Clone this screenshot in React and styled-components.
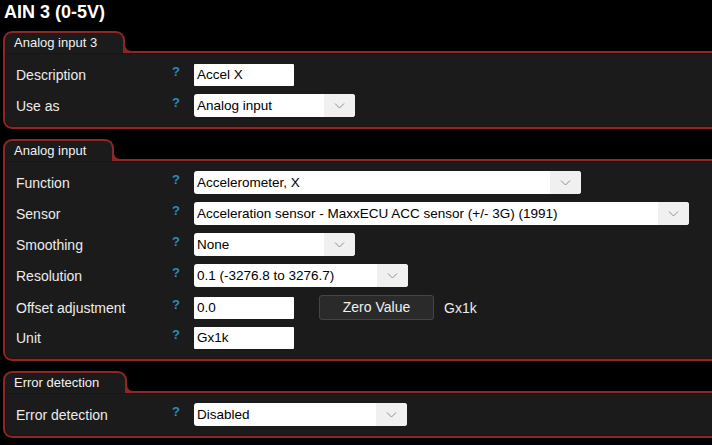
import React from 'react';
import styled, { createGlobalStyle } from 'styled-components';

const GlobalStyle = createGlobalStyle`
    html, body {
        margin: 0;
        padding: 0;
        background: #000;
        overflow: hidden;
    }
    body {
        font-family: "Liberation Sans", Arial, sans-serif;
        color: #ececec;
    }
`;

const Styled = {
    Page: styled.div`
        width: 712px;
        height: 445px;
        overflow: hidden;
        padding-left: 3px;
        box-sizing: border-box;
    `,
    Title: styled.h1`
        margin: 0;
        padding: 0 0 0 1px;
        height: 31px;
        box-sizing: border-box;
        font-size: 18px;
        font-weight: bold;
        line-height: 24px;
        color: #fff;
    `,
    Section: styled.section`
        display: flex;
        flex-direction: column;
        align-items: flex-start;
        width: 740px;
        margin-bottom: 10px;
    `,
    Tab: styled.div`
        position: relative;
        z-index: 1;
        height: 20px;
        margin-bottom: -2px;
        padding: 0 26px 0 9px;
        border: 2px solid #8e2626;
        border-bottom: none;
        border-radius: 9px 9px 0 0;
        background: #1b1b1b;
        font-size: 13px;
        line-height: 19px;
        color: #f2f2f2;

        &::after {
            content: '';
            position: absolute;
            left: 100%;
            bottom: 0;
            width: 10px;
            height: 10px;
            border-left: 2px solid #8e2626;
            border-bottom: 2px solid #8e2626;
            border-bottom-left-radius: 8px;
            background: #000;
        }
    `,
    Body: styled.div`
        align-self: stretch;
        display: flex;
        flex-direction: column;
        gap: 8px;
        padding: 10px 0 10px 11px;
        border: 2px solid #8e2626;
        border-radius: 0 0 0 9px;
        background: #1b1b1b;
        box-shadow: inset 0 0 0 1px #2a0d0d;
    `,
    Row: styled.div`
        display: grid;
        grid-template-columns: 156px 22px auto;
        align-items: center;
        height: 23px;
        font-size: 14px;
    `,
    Help: styled.span`
        color: #2a8cbd;
        font-weight: bold;
        font-size: 13px;
        position: relative;
        top: -3px;
    `,
    Controls: styled.div`
        display: flex;
        align-items: center;
    `,
    TextBox: styled.div`
        width: 100px;
        height: 22px;
        box-sizing: border-box;
        padding: 0 3px;
        background: #fff;
        border-radius: 1px;
        color: #000;
        font-size: 13.5px;
        line-height: 22px;
    `,
    Select: styled.div`
        display: flex;
        width: ${p => p.$width}px;
        height: 23px;
        background: #fff;
        border-radius: 3px;
        overflow: hidden;
        color: #000;
        font-size: 13.5px;
        line-height: 23px;
    `,
    SelectText: styled.span`
        flex: 1;
        padding-left: 3px;
        white-space: nowrap;
    `,
    Arrow: styled.span`
        display: flex;
        align-items: center;
        justify-content: center;
        width: 31px;
        background: #f0f0f0;
    `,
    Button: styled.button`
        margin-left: 25px;
        width: 115px;
        height: 25px;
        background: #2a2a2a;
        border: 1px solid #454545;
        border-radius: 3px;
        color: #f0f0f0;
        font-family: inherit;
        font-size: 14px;
        line-height: 20px;
        padding: 0 0 2px;
    `,
    UnitText: styled.span`
        margin-left: 10px;
        font-size: 14px;
    `,
};

const Chevron = () => (
    <svg width="11" height="6" viewBox="0 0 11 6">
        <path d="M1 0.5 L5.5 5 L10 0.5" fill="none" stroke="#8f8f8f" strokeWidth="1" />
    </svg>
);

const Dropdown = ({ value, width }) => (
    <Styled.Select $width={width}>
        <Styled.SelectText>{value}</Styled.SelectText>
        <Styled.Arrow><Chevron /></Styled.Arrow>
    </Styled.Select>
);

const Field = ({ label, children }) => (
    <Styled.Row>
        <span>{label}</span>
        <Styled.Help>?</Styled.Help>
        <Styled.Controls>{children}</Styled.Controls>
    </Styled.Row>
);

const Section = ({ title, children }) => (
    <Styled.Section>
        <Styled.Tab>{title}</Styled.Tab>
        <Styled.Body>{children}</Styled.Body>
    </Styled.Section>
);

export default function App() {
    return (
        <Styled.Page>
            <GlobalStyle />
            <Styled.Title>AIN 3 (0-5V)</Styled.Title>

            <Section title="Analog input 3">
                <Field label="Description"><Styled.TextBox>Accel X</Styled.TextBox></Field>
                <Field label="Use as"><Dropdown value="Analog input" width={161} /></Field>
            </Section>

            <Section title="Analog input">
                <Field label="Function"><Dropdown value="Accelerometer, X" width={387} /></Field>
                <Field label="Sensor">
                    <Dropdown value="Acceleration sensor - MaxxECU ACC sensor (+/- 3G) (1991)" width={495} />
                </Field>
                <Field label="Smoothing"><Dropdown value="None" width={161} /></Field>
                <Field label="Resolution"><Dropdown value="0.1 (-3276.8 to 3276.7)" width={214} /></Field>
                <Field label="Offset adjustment">
                    <Styled.TextBox>0.0</Styled.TextBox>
                    <Styled.Button>Zero Value</Styled.Button>
                    <Styled.UnitText>Gx1k</Styled.UnitText>
                </Field>
                <Field label="Unit"><Styled.TextBox>Gx1k</Styled.TextBox></Field>
            </Section>

            <Section title="Error detection">
                <Field label="Error detection"><Dropdown value="Disabled" width={213} /></Field>
            </Section>
        </Styled.Page>
    );
}
